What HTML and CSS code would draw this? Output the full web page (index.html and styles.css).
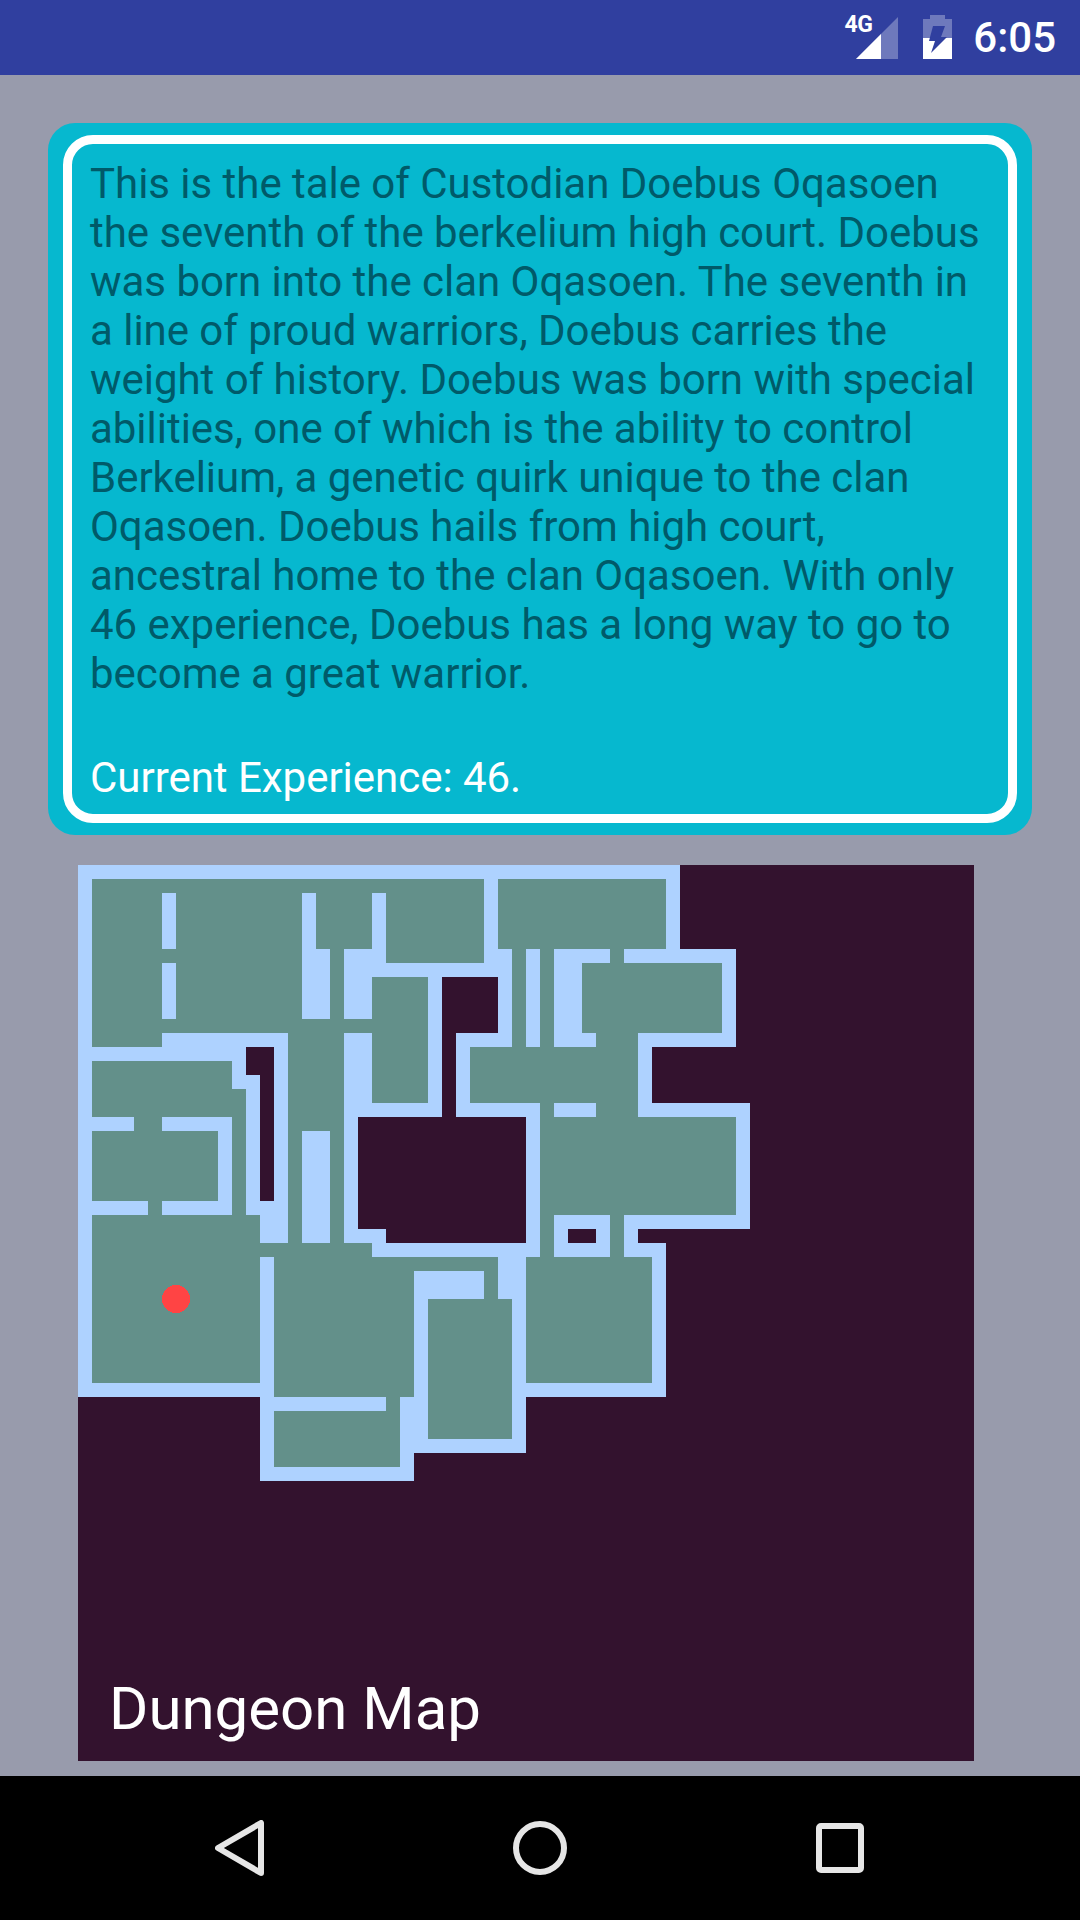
FILE: index.html
```html
<!DOCTYPE html>
<html lang="en">
<head>
    <meta charset="UTF-8">
    <title>Dungeon Map</title>
    <link rel="stylesheet" href="styles.css">
</head>
<body>

<div class="status-bar">
    <span class="net-type">4G</span>
    <svg class="signal" width="42" height="42" viewBox="0 0 42 42">
        <path class="dim" d="M42 0V42H0Z"/>
        <path class="lit" d="M25 17V42H0Z"/>
    </svg>
    <svg class="battery" width="29" height="44" viewBox="0 0 29 44">
        <path class="dim" d="M7 0H22V4H29V23H0V4H7Z"/>
        <rect class="lit" x="0" y="23" width="29" height="21"/>
        <path class="bolt" d="M10 11H22L18 22H24L8 38L12 26H6Z"/>
    </svg>
    <span class="clock">6:05</span>
</div>

<div class="content">
    <div class="card">
        <div class="card-inner">
            <p class="tale">This is the tale of Custodian Doebus Oqasoen the seventh of the berkelium high court. Doebus was born into the clan Oqasoen. The seventh in a line of proud warriors, Doebus carries the weight of history. Doebus was born with special abilities, one of which is the ability to control Berkelium, a genetic quirk unique to the clan Oqasoen. Doebus hails from high court, ancestral home to the clan Oqasoen. With only 46 experience, Doebus has a long way to go to become a great warrior.</p>
            <p class="experience">Current Experience: 46.</p>
        </div>
    </div>

    <div class="map">
        <!-- one unit = one 14px dungeon tile -->
        <svg class="tiles" width="896" height="896" viewBox="0 0 64 64">
            <g class="wall">
                <rect x="0" y="0" width="43" height="6"/>
                <rect x="0" y="6" width="47" height="7"/>
                <rect x="0" y="13" width="41" height="4"/>
                <rect x="0" y="17" width="48" height="9"/>
                <rect x="0" y="26" width="40" height="1"/>
                <rect x="0" y="27" width="42" height="11"/>
                <rect x="13" y="38" width="19" height="4"/>
                <rect x="13" y="42" width="11" height="2"/>
            </g>
            <g class="floor">
                <rect x="1" y="1" width="28" height="6"/>
                <rect x="30" y="1" width="12" height="5"/>
                <rect x="1" y="7" width="18" height="5"/>
                <rect x="19" y="11" width="2" height="1"/>
                <rect x="1" y="12" width="5" height="1"/>
                <rect x="15" y="12" width="4" height="16"/>
                <rect x="21" y="8" width="4" height="9"/>
                <rect x="31" y="6" width="1" height="7"/>
                <rect x="33" y="6" width="1" height="7"/>
                <rect x="38" y="6" width="1" height="1"/>
                <rect x="36" y="7" width="10" height="5"/>
                <rect x="37" y="12" width="3" height="1"/>
                <rect x="28" y="13" width="12" height="4"/>
                <rect x="33" y="17" width="1" height="1"/>
                <rect x="37" y="17" width="3" height="1"/>
                <rect x="33" y="18" width="14" height="7"/>
                <rect x="33" y="25" width="1" height="3"/>
                <rect x="38" y="25" width="1" height="3"/>
                <rect x="32" y="28" width="9" height="9"/>
                <rect x="1" y="14" width="10" height="2"/>
                <rect x="1" y="16" width="11" height="2"/>
                <rect x="4" y="18" width="2" height="1"/>
                <rect x="1" y="19" width="9" height="5"/>
                <rect x="5" y="24" width="1" height="1"/>
                <rect x="11" y="16" width="1" height="9"/>
                <rect x="1" y="25" width="12" height="12"/>
                <rect x="1" y="27" width="20" height="1"/>
                <rect x="14" y="28" width="10" height="10"/>
                <rect x="24" y="28" width="6" height="1"/>
                <rect x="29" y="29" width="1" height="2"/>
                <rect x="25" y="31" width="6" height="10"/>
                <rect x="22" y="38" width="1" height="1"/>
                <rect x="14" y="39" width="9" height="4"/>
            </g>
            <g class="wall">
                <rect x="6" y="2" width="1" height="4"/>
                <rect x="6" y="7" width="1" height="4"/>
                <rect x="16" y="2" width="1" height="4"/>
                <rect x="16" y="6" width="2" height="5"/>
                <rect x="21" y="2" width="1" height="5"/>
                <rect x="19" y="6" width="3" height="1"/>
                <rect x="16" y="19" width="2" height="8"/>
            </g>
            <g class="void">
                <rect x="12" y="13" width="2" height="2"/>
                <rect x="13" y="15" width="1" height="9"/>
                <rect x="26" y="8" width="4" height="4"/>
                <rect x="26" y="12" width="1" height="6"/>
                <rect x="20" y="18" width="12" height="8"/>
                <rect x="22" y="26" width="10" height="1"/>
                <rect x="35" y="26" width="2" height="1"/>
            </g>
            <circle class="player" cx="7" cy="31" r="1"/>
        </svg>
        <span class="map-label">Dungeon Map</span>
    </div>
</div>

<div class="nav-bar">
    <svg width="50" height="56" viewBox="0 0 50 56">
        <path class="nav-icon" d="M46 3V53L3 28Z"/>
    </svg>
    <svg width="54" height="54" viewBox="0 0 54 54">
        <circle class="nav-icon" cx="27" cy="27" r="24"/>
    </svg>
    <svg width="48" height="50" viewBox="0 0 48 50">
        <rect class="nav-icon" x="3" y="3" width="42" height="44" rx="2"/>
    </svg>
</div>

</body>
</html>
```

FILE: styles.css
```css
body {
    font-family: 'Roboto', sans-serif;
    background: #989bac;
    margin: 0;
    width: 1080px;
    height: 1920px;
    display: flex;
    flex-direction: column;
}

.status-bar {
    height: 75px;
    background: #303f9f;
    color: white;
    display: flex;
    align-items: center;
    justify-content: flex-end;
    padding-right: 24px;
}

.net-type {
    font-size: 23px;
    font-weight: 700;
    letter-spacing: -0.5px;
    margin: 0 -16px 26px 0;
}

.signal {
    margin: 1px 25px 0 0;
}

.battery {
    margin: -1px 21px 0 0;
}

.clock {
    font-size: 42px;
    font-weight: 500;
}

.dim {
    fill: rgba(255, 255, 255, 0.3);
}

.lit {
    fill: white;
}

.bolt {
    fill: #303f9f;
}

.content {
    flex: 1;
    padding: 48px 48px 0;
}

.card {
    background: #06b8cf;
    border-radius: 27px;
    padding: 12px 15px;
}

.card-inner {
    border: 9px solid white;
    border-radius: 30px;
    padding: 15px 18px 12px;
}

.tale {
    margin: 0;
    font-size: 42px;
    line-height: 49px;
    letter-spacing: -0.03px;
    color: #005a69;
}

.experience {
    margin: 55px 0 0;
    font-size: 42px;
    line-height: 49px;
    letter-spacing: -0.03px;
    color: white;
}

.map {
    position: relative;
    width: 896px;
    height: 896px;
    margin: 30px 0 0 30px;
    background: #33122e;
}

.tiles {
    display: block;
    shape-rendering: crispEdges;
}

.wall {
    fill: #aed2ff;
}

.floor {
    fill: #63908a;
}

.void {
    fill: #33122e;
}

.player {
    fill: #ff4444;
}

.map-label {
    position: absolute;
    left: 31px;
    bottom: 17px;
    font-size: 60px;
    color: white;
}

.nav-bar {
    height: 144px;
    background: black;
    display: grid;
    grid-template-columns: repeat(3, 300px);
    justify-content: center;
    justify-items: center;
    align-items: center;
}

.nav-icon {
    fill: none;
    stroke: #e6e6e6;
    stroke-width: 6;
    stroke-linejoin: round;
}
```
